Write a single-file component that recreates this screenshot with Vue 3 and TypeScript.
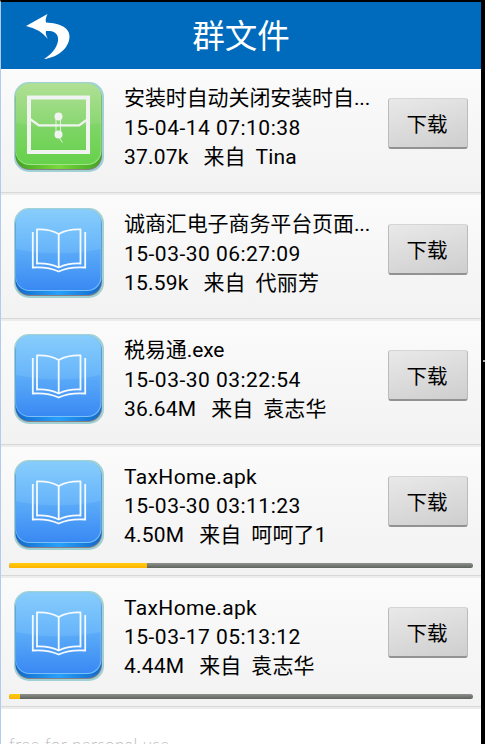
<script setup lang="ts">
interface FileItem {
  name: string
  time: string
  size: string
  sender: string
  kind: 'archive' | 'book'
  progress?: number
}

const files: FileItem[] = [
  { name: '安装时自动关闭安装时自...', time: '15-04-14 07:10:38', size: '37.07k', sender: 'Tina', kind: 'archive' },
  { name: '诚商汇电子商务平台页面...', time: '15-03-30 06:27:09', size: '15.59k', sender: '代丽芳', kind: 'book' },
  { name: '税易通.exe', time: '15-03-30 03:22:54', size: '36.64M', sender: '袁志华', kind: 'book' },
  { name: 'TaxHome.apk', time: '15-03-30 03:11:23', size: '4.50M', sender: '呵呵了1', kind: 'book', progress: 29.8 },
  { name: 'TaxHome.apk', time: '15-03-17 05:13:12', size: '4.44M', sender: '袁志华', kind: 'book', progress: 2.4 },
]
</script>

<template>
  <div class="screen">
    <div class="phone">
      <header class="bar">
        <svg class="back" width="44" height="46" viewBox="0 0 44 46">
          <path d="M0 13 L21.500 1 Q19 6 20 9.500 C34 10 44 15 43.500 24 C43 35 32 44.500 18 46 C28 40 33 31 32 24.500 C31 19 26 17.500 20 18 Q19 21 22 26 Q14 16 0 13Z" fill="#fff" />
        </svg>
        <h1>群文件</h1>
      </header>
      <ul class="list">
        <li v-for="(f, i) in files" :key="i" class="row">
          <div class="main">
            <svg class="icon" width="90" height="90" viewBox="0 0 90 90">
              <defs>
                <linearGradient :id="'face' + i" x1="0" y1="0" x2="0" y2="1">
                  <stop offset="0" :stop-color="f.kind === 'book' ? '#87cdfc' : '#b0e094'" />
                  <stop offset="0.5" :stop-color="f.kind === 'book' ? '#68b5fa' : '#8ad773'" />
                  <stop offset="1" :stop-color="f.kind === 'book' ? '#3b88f3' : '#68d34d'" />
                </linearGradient>
                <linearGradient :id="'edge' + i" x1="0" y1="0" x2="1" y2="0">
                  <stop offset="0" :stop-color="f.kind === 'book' ? '#1468c8' : '#3fa321'" />
                  <stop offset="0.5" :stop-color="f.kind === 'book' ? '#26a1fb' : '#79d83c'" />
                  <stop offset="1" :stop-color="f.kind === 'book' ? '#1468c8' : '#3fa321'" />
                </linearGradient>
              </defs>
              <rect width="90" height="90" rx="15" fill="#a0d1d5" />
              <rect x="1.500" y="3" width="86.500" height="85" rx="14" fill="#8a7f83" />
              <rect x="1.500" y="3" width="86" height="84" rx="14" :fill="'url(#edge' + i + ')'" />
              <rect x="1.500" y="1.500" width="86" height="81.500" rx="14" :fill="f.kind === 'book' ? '#79c0fb' : '#a0e38b'" />
              <rect x="2" y="1.500" width="84.500" height="80.500" rx="13.500" :fill="'url(#face' + i + ')'" />
              <path d="M2 41 Q44 50 86.500 41 V68 Q86.500 82 73 82 H15 Q2 82 2 68Z" :fill="f.kind === 'book' ? '#348bf6' : '#60cf43'" opacity=".22" />
              <g v-if="f.kind === 'book'" fill="none" stroke="#f5faff" stroke-width="1.800">
                <path d="M23 21.500 Q36 21 44.700 26 Q54 21 66.500 21.500 V55.500 Q54 55 44.700 59.500 Q35 55 23 55.500Z" />
                <path d="M44.700 26V59.500M18.800 24V59.500Q34 58.500 44.700 63.500Q55 58.500 71.200 59.500V24" />
              </g>
              <g v-else fill="none" stroke="#f0f3ef">
                <rect x="15" y="15.500" width="59" height="54.500" stroke-width="4" />
                <path d="M16 37 L25 43.300 H65 L74 37" stroke-width="2.200" />
                <path d="M42 35V53M46.500 35V53M44 54L48.500 60.500" stroke-width=".900" />
                <circle cx="44.500" cy="34.500" r="4" fill="#f0f3ef" stroke="none" />
                <circle cx="44.500" cy="52.500" r="4" fill="#f0f3ef" stroke="none" />
              </g>
            </svg>
            <div class="info">
              <div class="name" :class="{ latin: f.name.startsWith('Tax') }">{{ f.name }}</div>
              <div class="time">{{ f.time }}</div>
              <div class="meta"><span>{{ f.size }}</span><span>来自</span><span>{{ f.sender }}</span></div>
            </div>
            <button class="download" type="button">下载</button>
          </div>
          <div v-if="f.progress !== undefined" class="track">
            <div class="fill" :style="{ width: f.progress + '%' }"></div>
          </div>
        </li>
      </ul>
      <footer class="foot">free for personal use</footer>
    </div>
    <div class="tick"></div>
  </div>
</template>

<style>
body { margin: 0; background: #000; overflow: hidden; }
</style>

<style scoped>
.screen {
  display: flex;
  align-items: flex-start;
  width: 485px;
  height: 744px;
  overflow: hidden;
  background: #000;
  color: #000;
  font-family: Roboto, "Noto Sans CJK SC", sans-serif;
  font-weight: 400;
}
.phone {
  box-sizing: border-box;
  width: 481px;
  height: 744px;
  border-top: 2px solid #000;
  border-left: 1px solid #b1caee;
  background: #fff;
  overflow: hidden;
}
.bar {
  display: grid;
  grid-template-columns: 80px 1fr 80px;
  height: 67px;
  background: #006bbd;
}
.back { margin: 11px 0 0 25px; }
h1 {
  margin: 0;
  color: #fff;
  font-size: 32.500px;
  line-height: 71px;
  font-weight: 400;
  text-align: center;
}
.list { margin: 0; padding: 0; list-style: none; }
.row {
  border-bottom: 2px solid #ececec;
  background: linear-gradient(#fbfbfb, #f2f2f2);
  box-shadow: inset 0 -1px #d8d8d8;
  padding-bottom: 1px;
}
.main {
  display: flex;
  height: 123px;
}
.row:has(.track) .main { height: 116px; }
.icon { flex: none; margin: 13px 0 0 13px; }
.info {
  width: 264px;
  margin-top: 15px;
  padding-left: 20px;
  font-size: 21px;
  line-height: 29px;
  white-space: nowrap;
}
.info > div { height: 29.500px; }
.name { letter-spacing: -.1px; }
.name.latin { line-height: 31px; letter-spacing: .36px; }
.time { letter-spacing: .48px; }
.meta { display: flex; }
.meta span:first-child { letter-spacing: .18px; }
.meta span:nth-child(2) { margin: 0 10px 0 15px; }
.meta span:last-child { letter-spacing: .2px; }
.download {
  width: 80px;
  height: 51px;
  margin: 29px 0 0;
  padding: 4px 2px 0 0;
  border: 1px solid #bbb;
  border-top-color: #d5d5d5;
  border-bottom: 2px solid #929292;
  border-radius: 3px;
  background: linear-gradient(165deg, #e9e9e9, #cecece);
  color: #000;
  font-family: inherit;
  font-weight: inherit;
  font-size: 20.500px;
  line-height: 44px;
}
.track {
  width: 464px;
  height: 5px;
  margin: 0 0 7px 8px;
  border-radius: 3px;
  background: linear-gradient(#8d918c, #5d625d);
  overflow: hidden;
}
.fill { height: 5px; background: linear-gradient(#ffcb10, #ffb400); }
.foot {
  padding: 25px 0 0 8px;
  color: #bbb;
  font-family: Lato, sans-serif;
  font-size: 17px;
  font-weight: 300;
  letter-spacing: .45px;
  line-height: 22px;
  white-space: nowrap;
}
.tick { width: 2px; height: 2px; margin: 360px 0 0 2px; background: #aaa; }
</style>
